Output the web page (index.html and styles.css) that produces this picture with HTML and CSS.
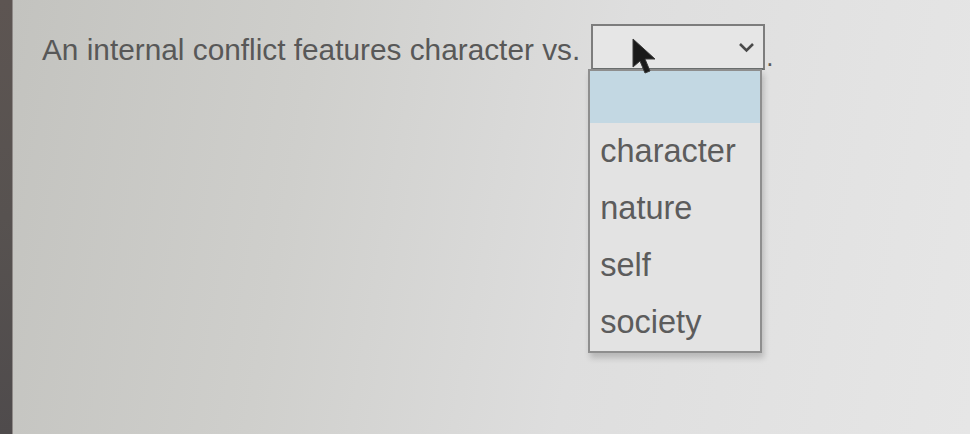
FILE: index.html
```html
<!DOCTYPE html>
<html>
<head>
<meta charset="utf-8">
<link rel="stylesheet" href="styles.css">
</head>
<body>
<div class="screen">
  <div class="bezel"></div>
  <div class="page">
    <div class="question">
      <span class="prompt">An internal conflict features character vs.</span>
      <span class="select-wrap">
        <span class="select">
          <svg class="chev" width="17" height="11" viewBox="0 0 17 11"><path d="M2 2 L8.5 8.5 L15 2" fill="none" stroke="#4a4a4a" stroke-width="2.6"/></svg>
        </span>
        <ul class="menu">
          <li class="opt blank"></li>
          <li class="opt">character</li>
          <li class="opt">nature</li>
          <li class="opt">self</li>
          <li class="opt">society</li>
        </ul>
        <svg class="cursor" width="28" height="40" viewBox="0 0 28 40"><path d="M2 2 L2 30 L9 24 L14 36 L19 34 L14 22 L24 22 Z" fill="#1a1a1a" stroke="#3a3a3a" stroke-width="1"/></svg>
      </span>
      <span class="period">.</span>
    </div>
  </div>
</div>
</body>
</html>
```
FILE: styles.css
```css
html, body {
  margin: 0;
  padding: 0;
  width: 970px;
  height: 434px;
  overflow: hidden;
}
.screen {
  display: flex;
  width: 970px;
  height: 434px;
  background: #dcdcda;
}
.bezel {
  width: 12px;
  flex: none;
  background: linear-gradient(180deg, #5d5552 0%, #575250 50%, #4f4b4c 100%);
  border-right: 1px solid #8f8a88;
}
.page {
  flex: 1;
  background: linear-gradient(100deg, #c3c3bf 0%, #cfcfcc 30%, #dedede 60%, #e6e6e6 100%);
  padding: 24px 0 0 29px;
  font-family: "Liberation Sans", Arial, sans-serif;
}
.question {
  display: flex;
  align-items: flex-start;
}
.prompt {
  font-size: 29.8px;
  color: #585858;
  line-height: 1;
  margin-top: 11px;
}
.select-wrap {
  position: relative;
  margin-left: 11px;
}
.select {
  display: flex;
  align-items: center;
  justify-content: flex-end;
  box-sizing: border-box;
  width: 174px;
  height: 46px;
  border: 2px solid #7d7d7d;
  border-bottom-color: #6a6e6e;
  background: #e6e6e6;
  padding-right: 8px;
}
.chev {
  display: block;
}
.period {
  font-size: 26px;
  color: #5a5a5a;
  line-height: 1;
  margin-top: 20px;
  margin-left: 1px;
}
.menu {
  position: absolute;
  top: 45px;
  left: -3px;
  width: 174px;
  box-sizing: border-box;
  margin: 0;
  padding: 0;
  list-style: none;
  border: 2px solid #8e8e8e;
  background: #e3e3e3;
  box-shadow: 2px 5px 6px rgba(0,0,0,0.18);
}
.opt {
  height: 57px;
  line-height: 57px;
  padding-left: 10px;
  font-size: 32.5px;
  color: #5c5c5c;
  box-sizing: border-box;
}
.opt.blank {
  height: 52px;
  background: #c3d8e3;
}
.cursor {
  position: absolute;
  top: 13px;
  left: 40px;
}
```
